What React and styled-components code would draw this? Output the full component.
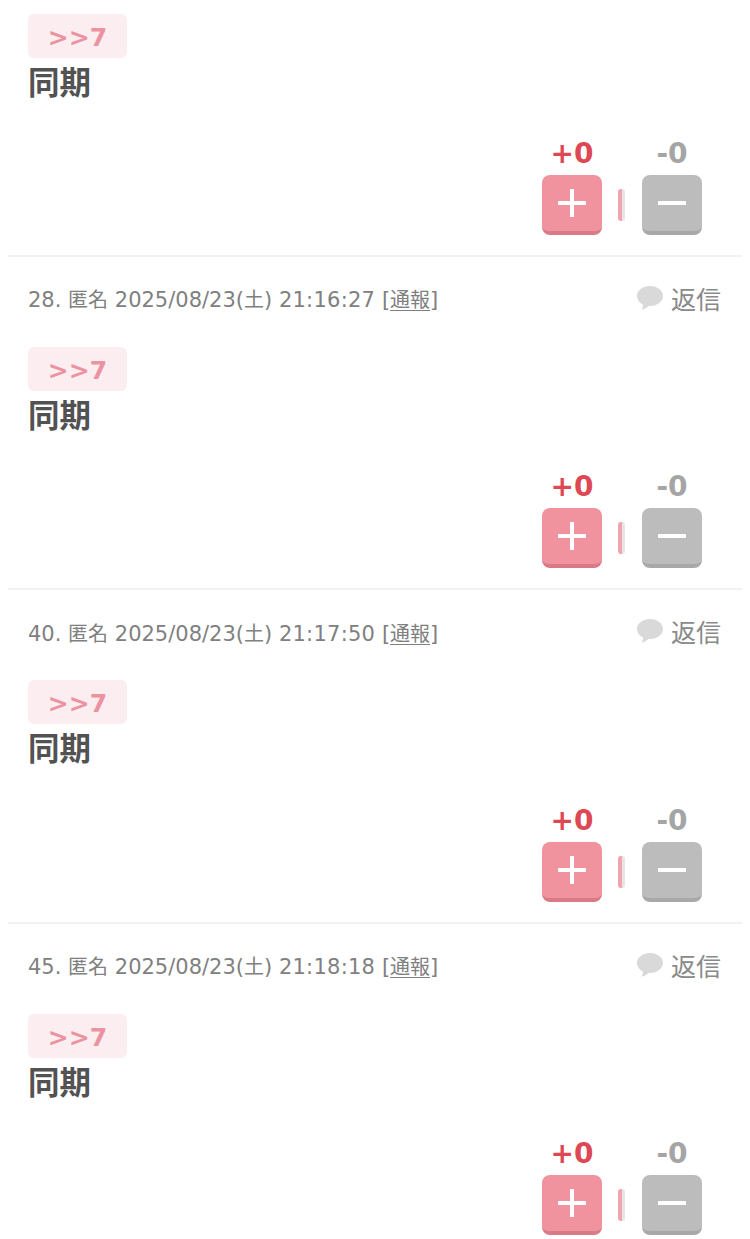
import styled, { createGlobalStyle } from "styled-components"

const GlobalStyle = createGlobalStyle`
  html, body {
    margin: 0;
    padding: 0;
    background: #fff;
  }
  body {
    font-family: "DejaVu Sans", "Noto Sans CJK JP", sans-serif;
    overflow: hidden;
  }
`

const List = styled.div`
  width: 750px;
  height: 1239px;
  overflow: hidden;
  padding: 0 8px;
  box-sizing: border-box;
`

const Item = styled.div`
  padding: ${(p) => (p.$first ? "14px 20px 19.6px" : "26px 20px 19.93px")};
  border-bottom: ${(p) => (p.$last ? "none" : "2px solid #f2f2f2")};
`

const Header = styled.div`
  display: flex;
  justify-content: space-between;
  align-items: center;
  height: 32px;
  margin-bottom: 32px;
`

const Meta = styled.div`
  font-size: 21px;
  color: #808080;
  white-space: nowrap;

  & u {
    text-decoration-thickness: 1px;
    text-underline-offset: 3px;
  }
`

const Kanji = styled.span`
  font-size: 20px;
`

const Time = styled.span`
  letter-spacing: 0.25px;
`

const Reply = styled.div`
  display: flex;
  align-items: center;
  gap: 8px;
  margin-right: 1px;
  padding-bottom: 2px;
  font-size: 25px;
  color: #8a8a8a;
`

const Badge = styled.div`
  display: inline-flex;
  justify-content: center;
  align-items: center;
  width: 99px;
  height: 44px;
  padding-top: 3px;
  box-sizing: border-box;
  border-radius: 6px;
  background: #fceef0;
  color: #eb93a0;
  font-size: 25px;
  font-weight: 700;
`

const Body = styled.div`
  font-family: "Noto Sans CJK JP", sans-serif;
  font-size: 31.5px;
  font-weight: 700;
  line-height: 45px;
  color: #525252;
  margin-bottom: 32.4px;
`

const Votes = styled.div`
  display: flex;
  justify-content: flex-end;
  align-items: flex-end;
  padding-right: 20px;
`

const Vote = styled.div`
  display: flex;
  flex-direction: column;
  align-items: center;
  width: 60px;
`

const Count = styled.div`
  font-size: 28px;
  font-weight: 700;
  line-height: 34px;
  padding-top: 2px;
  margin-bottom: 4px;
  color: ${(p) => (p.$minus ? "#a5a5a5" : "#de4854")};
`

const VoteButton = styled.div`
  display: flex;
  justify-content: center;
  align-items: center;
  box-sizing: border-box;
  width: 60px;
  height: 60px;
  border-radius: 8px;
  background: ${(p) => (p.$minus ? "#bcbcbc" : "#f1929f")};
  border-bottom: 4px solid ${(p) => (p.$minus ? "#a8a8a8" : "#db7a87")};
`

const Divider = styled.div`
  width: 7px;
  height: 32px;
  margin: 0 17px 14px 16px;
  border-radius: 3px;
  background: linear-gradient(to right, #f1a3ae 0 60%, #e6e6e6 60% 100%);
`

const Bubble = () => (
  <svg width="26" height="24" viewBox="0 0 26 24">
    <path
      d="M13 0C5.8 0 0 4.4 0 10c0 3.6 2.4 6.7 6 8.5.1 1.8-.6 3.6-1.8 5 2.9-.3 5.4-1.6 7.2-3.6.5.1 1.1.1 1.6.1 7.2 0 13-4.4 13-10S20.2 0 13 0z"
      fill="#d9d9d9"
    />
  </svg>
)

const Plus = () => (
  <svg width="30" height="30" viewBox="0 0 30 30">
    <path d="M1 15h28M15 1v28" stroke="#fff" strokeWidth="4" fill="none" />
  </svg>
)

const Minus = () => (
  <svg width="30" height="30" viewBox="0 0 30 30">
    <path d="M1 15h28" stroke="#fff" strokeWidth="4" fill="none" />
  </svg>
)

const comments = [
  { id: 0 },
  { id: 28, time: "21:16:27" },
  { id: 40, time: "21:17:50" },
  { id: 45, time: "21:18:18" },
]

const App = () => {
  return (
    <List>
      <GlobalStyle />
      {comments.map((c, i) => (
        <Item key={c.id} $first={i === 0} $last={i === comments.length - 1}>
          {c.time && (
            <Header>
              <Meta>
                {c.id}. <Kanji>匿名</Kanji> 2025/08/23(<Kanji>土</Kanji>) <Time>{c.time}</Time> [
                <u>
                  <Kanji>通報</Kanji>
                </u>
                ]
              </Meta>
              <Reply>
                <Bubble />
                返信
              </Reply>
            </Header>
          )}
          <Badge>&gt;&gt;7</Badge>
          <Body>同期</Body>
          <Votes>
            <Vote>
              <Count>+0</Count>
              <VoteButton>
                <Plus />
              </VoteButton>
            </Vote>
            <Divider />
            <Vote>
              <Count $minus>-0</Count>
              <VoteButton $minus>
                <Minus />
              </VoteButton>
            </Vote>
          </Votes>
        </Item>
      ))}
    </List>
  )
}

export default App
